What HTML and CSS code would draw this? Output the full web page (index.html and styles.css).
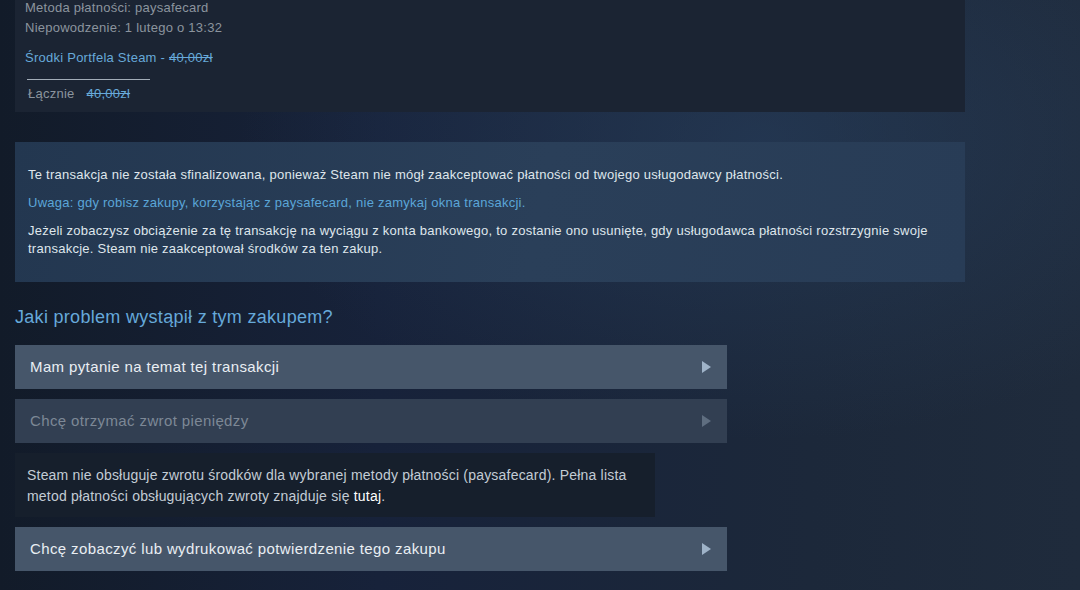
FILE: index.html
```html
<!DOCTYPE html>
<html lang="pl">
<head>
    <meta charset="UTF-8">
    <meta name="viewport" content="width=device-width, initial-scale=1.0">
    <title>Pomoc Steam - Zakup</title>
    <link rel="stylesheet" href="styles.css">
</head>
<body>
    <div class="page">
        <div class="purchase-card">
            <p class="meta">Metoda płatności: paysafecard</p>
            <p class="meta">Niepowodzenie: 1 lutego o 13:32</p>
            <p class="item">Środki Portfela Steam - <s>40,00zł</s></p>
            <div class="total">
                <span class="total-label">Łącznie</span>
                <s class="total-price">40,00zł</s>
            </div>
        </div>

        <div class="notice">
            <p>Te transakcja nie została sfinalizowana, ponieważ Steam nie mógł zaakceptować płatności od twojego usługodawcy płatności.</p>
            <p class="warning">Uwaga: gdy robisz zakupy, korzystając z paysafecard, nie zamykaj okna transakcji.</p>
            <p>Jeżeli zobaczysz obciążenie za tę transakcję na wyciągu z konta bankowego, to zostanie ono usunięte, gdy usługodawca płatności rozstrzygnie swoje transakcje. Steam nie zaakceptował środków za ten zakup.</p>
        </div>

        <h2 class="question">Jaki problem wystąpił z tym zakupem?</h2>

        <div class="options">
            <a class="option" href="#">
                <span>Mam pytanie na temat tej transakcji</span>
                <span class="arrow"></span>
            </a>
            <a class="option disabled" href="#">
                <span>Chcę otrzymać zwrot pieniędzy</span>
                <span class="arrow"></span>
            </a>
            <div class="option-info">
                Steam nie obsługuje zwrotu środków dla wybranej metody płatności (paysafecard). Pełna lista metod płatności obsługujących zwroty znajduje się <a href="#">tutaj</a>.
            </div>
            <a class="option" href="#">
                <span>Chcę zobaczyć lub wydrukować potwierdzenie tego zakupu</span>
                <span class="arrow"></span>
            </a>
        </div>
    </div>
</body>
</html>
```

FILE: styles.css
```css
* {
    box-sizing: border-box;
    margin: 0;
    padding: 0;
}

html, body {
    height: 100%;
}

body {
    font-family: 'Liberation Sans', Arial, sans-serif;
    color: #c6d4df;
    background-color: #1b2636;
    background-image:
        radial-gradient(ellipse 520px 300px at 760px 140px, rgba(42, 68, 102, 0.5), rgba(42, 68, 102, 0) 100%),
        linear-gradient(90deg, #121b29 0%, #17223a 35%, #1c283a 75%, #1f2b3c 100%);
    overflow: hidden;
}

.page {
    width: 950px;
    margin-left: 15px;
}

/* purchase summary */
.purchase-card {
    background: #1b2433;
    margin-top: -2px;
    padding: 0 10px;
    height: 114px;
    font-size: 13px;
    line-height: 20px;
    letter-spacing: 0.25px;
}

.meta {
    color: #8b949e;
}

.item {
    margin-top: 10px;
    color: #67a9d9;
}

.item s {
    color: #67a9d9;
}

.total {
    margin-top: 11px;
    width: 123px;
    border-top: 1px solid #a3adb8;
    margin-left: 2px;
    padding-top: 4px;
    padding-left: 1px;
}

.total-label {
    color: #8b949e;
    margin-right: 8px;
}

.total-price {
    color: #67a9d9;
}

/* notice box */
.notice {
    margin-top: 30px;
    background: linear-gradient(100deg, #233750 0%, #2a3f59 55%, #283c56 100%);
    padding: 24px 13px;
    font-size: 13px;
    line-height: 18px;
    letter-spacing: 0.25px;
    color: #dfe6ec;
}

.notice p + p {
    margin-top: 10px;
}

.notice .warning {
    color: #5ba6d8;
}

.question {
    margin-top: 23px;
    font-size: 18px;
    font-weight: normal;
    line-height: 24px;
    letter-spacing: 0.3px;
    color: #66a9da;
}

/* options */
.options {
    width: 712px;
    margin-top: 16px;
    display: flex;
    flex-direction: column;
    gap: 10px;
}

.option {
    display: flex;
    align-items: center;
    justify-content: space-between;
    height: 44px;
    padding: 0 16px 2px 15px;
    background: #46566a;
    color: #e9eef3;
    font-size: 15px;
    letter-spacing: 0.38px;
    text-decoration: none;
}

.option.disabled {
    background: #323f52;
    color: #7d8896;
}

.arrow {
    width: 0;
    height: 0;
    margin-top: 2px;
    border-top: 6px solid transparent;
    border-bottom: 6px solid transparent;
    border-left: 9px solid #9fb3c8;
}

.option.disabled .arrow {
    border-left-color: #5f6e80;
}

.option-info {
    width: 640px;
    background: #161f2c;
    padding: 12px 12px 10px;
    font-size: 14px;
    line-height: 21px;
    letter-spacing: 0.2px;
    color: #c3ccd5;
}

.option-info a {
    color: #ffffff;
    text-decoration: none;
}
```
